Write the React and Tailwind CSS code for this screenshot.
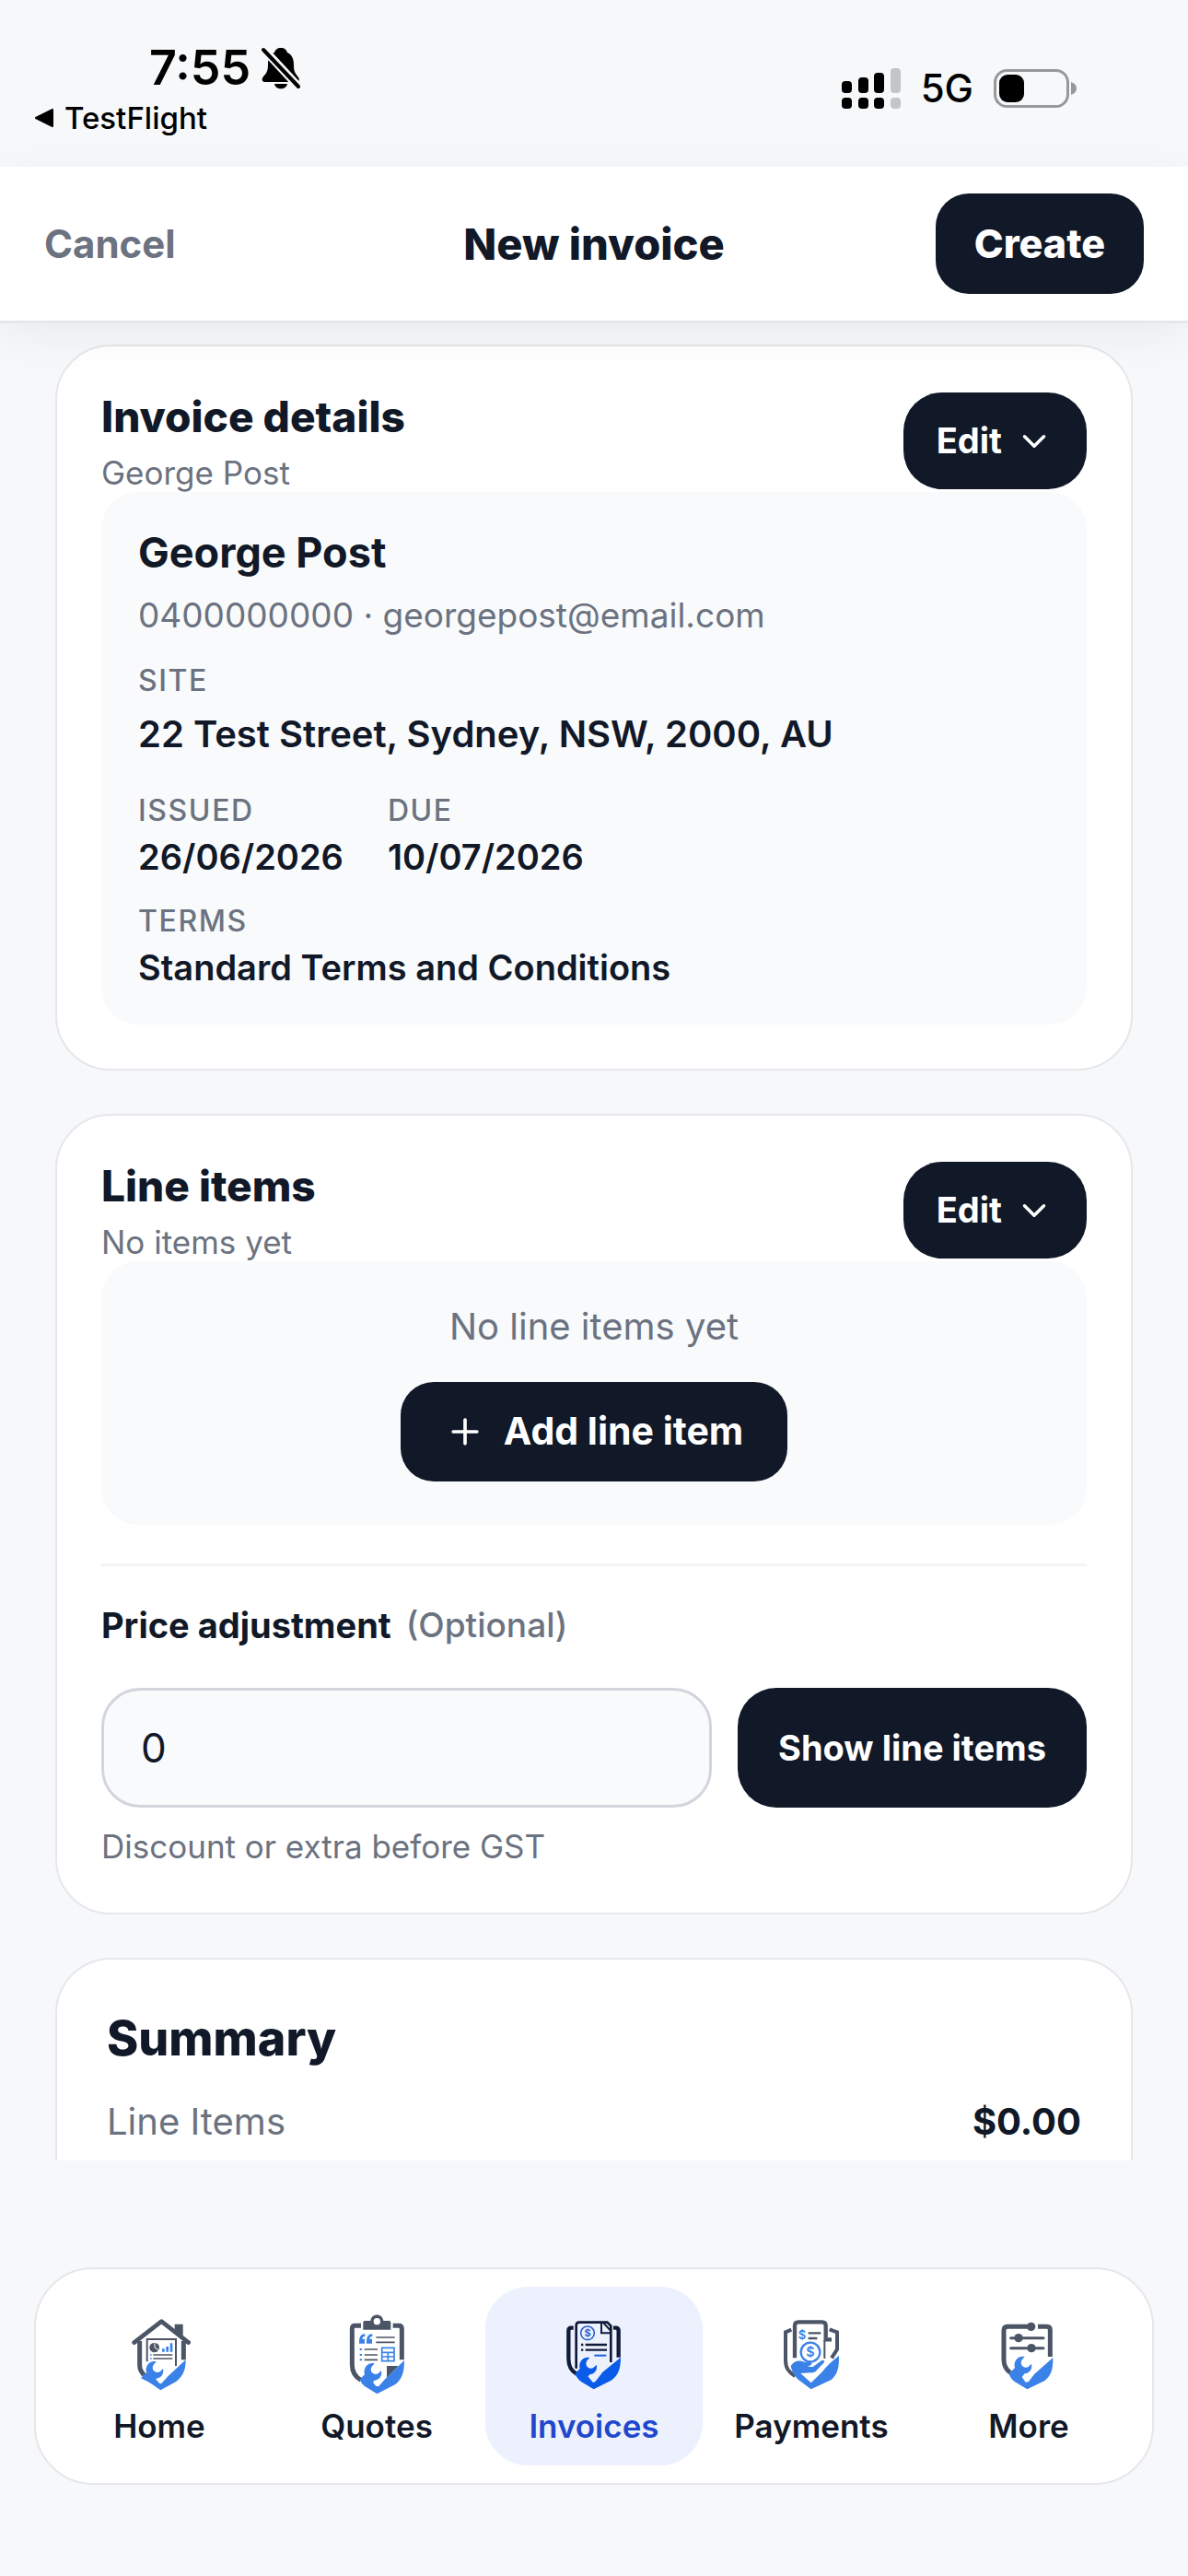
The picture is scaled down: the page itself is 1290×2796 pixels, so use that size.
import React, { useState } from 'react';
import { ChevronDown, Plus } from 'lucide-react';

const SLATE = '#4b5565';
const BLUE = '#3b82e8';

// The wrench that sits in the lower left of a shield, drawn from its jaw centre
function Wrench({ x, y, color }) {
  return (
    <g transform={`translate(${x} ${y})`} fill={color}>
      <path d="M4 -28 C-18 -33 -34 -13 -28 8 L-46 26 L-10 44 L4 27 C20 25 30 12 26 -5 L16 5 Q4 10 -4 2 Q-11 -7 -5 -18 Z" />
    </g>
  );
}

function HomeIcon() {
  return (
    <svg viewBox="51 90 216 270" className="h-[90px] w-[72px]" fill="none" aria-hidden="true">
      <path d="M209 128 H236 V172 L209 148 Z" fill={SLATE} />
      <path d="M77 188 L166 119 L254 188" stroke={SLATE} strokeWidth="14" strokeLinecap="round" strokeLinejoin="round" />
      <path d="M95 183 V262 C95 275 100 286 112 296" stroke={SLATE} strokeWidth="15" />
      <path d="M238 183 V244" stroke={SLATE} strokeWidth="15" />
      <path d="M119 250 V177 H213 V264" stroke={SLATE} strokeWidth="6" />
      <circle cx="143" cy="204" r="16" fill={SLATE} />
      <path d="M144 188 V204 L156 212" stroke="white" strokeWidth="3" />
      <path d="M172 218 V208 M185 218 V201 M198 218 V190" stroke={BLUE} strokeWidth="8" />
      <path d="M139 228 H202 M139 240 H202" stroke={SLATE} strokeWidth="4" />
      <path d="M129 228 H134 M129 240 H134" stroke={BLUE} strokeWidth="4" />
      <path d="M245 244 C245 275 238 296 215 314 L163 343 L122 314 C113 308 107 302 103 293 L130 288 L160 321 L166 321 L187 298 Z" fill={BLUE} />
      <Wrench x={145} y={278} color={BLUE} />
    </svg>
  );
}

function QuotesIcon() {
  return (
    <svg viewBox="759 90 216 270" className="h-[90px] w-[72px]" fill="none" aria-hidden="true">
      <path d="M816 133 H797 Q787 133 787 143 V260 C787 282 797 299 816 310" stroke={SLATE} strokeWidth="15" />
      <path d="M920 133 H939 Q949 133 949 143 V244" stroke={SLATE} strokeWidth="15" />
      <path
        d="M823 122 Q823 117 828 117 H847 C850 91 886 91 889 117 H908 Q913 117 913 122 V146 H823 Z M868 108 A11 11 0 1 0 868 130 A11 11 0 1 0 868 108 Z"
        fill={SLATE}
        fillRule="evenodd"
      />
      <path d="M829 160 C812 162 810 172 810 191 H828 V176 H820 C820 170 823 168 829 168 Z M853 160 C836 162 834 172 834 191 H852 V176 H844 C844 170 847 168 853 168 Z" fill={BLUE} />
      <path d="M865 171 H926 M865 187 H926 M827 210 H870 M827 228 H870 M827 244 H870" stroke={SLATE} strokeWidth="5" />
      <path d="M812 210 H819 M812 228 H819 M812 244 H819" stroke={BLUE} strokeWidth="6" />
      <path d="M884 205 H924 V248 H884 Z M884 220 H924 M884 234 H924 M904 220 V248" stroke={BLUE} strokeWidth="5" />
      <path d="M900 264 H938 L900 302 Z" fill={SLATE} />
      <path d="M957 246 C957 284 950 306 928 324 L868 355 L828 330 C821 325 816 318 813 309 L838 296 L865 330 L874 330 L893 308 Z" fill={BLUE} />
      <Wrench x={856} y={284} color={BLUE} />
    </svg>
  );
}

function InvoicesIcon() {
  return (
    <svg viewBox="327 150 216 270" className="h-[90px] w-[72px]" fill="none" aria-hidden="true">
      <path d="M368 200 H361 Q352 200 352 210 V300 C352 325 359 339 378 350" stroke="#101b3b" strokeWidth="13" />
      <path d="M498 200 H506 Q515 200 515 210 V296" stroke="#101b3b" strokeWidth="13" />
      <path d="M377 332 V192 Q377 182 387 182 H478 L490 194 V312" stroke="#101b3b" strokeWidth="8" />
      <path d="M459 184 V217 H490 M466 184 L490 210" stroke="#101b3b" strokeWidth="6" />
      <circle cx="414" cy="217" r="22" stroke="#2b5fd0" strokeWidth="5" />
      <text x="414" y="229" textAnchor="middle" fontSize="33" fontWeight="700" fill="#2b5fd0">$</text>
      <path d="M407 255 H477 M407 272 H477 M393 255 H400 M393 272 H400" stroke="#101b3b" strokeWidth="7" />
      <path d="M436 290 H475" stroke="#1d5fe0" strokeWidth="6" />
      <path d="M522 296 C522 335 513 356 491 371 L434 400 L394 376 C386 371 380 363 374 352 L402 342 L432 378 L440 374 L463 344 Z" fill="#0a5be8" />
      <Wrench x={417} y={325} color="#0a5be8" />
    </svg>
  );
}

function PaymentsIcon() {
  return (
    <svg viewBox="195 90 216 270" className="h-[90px] w-[72px]" fill="none" aria-hidden="true">
      <path d="M238 146 L219 154 V245 C219 270 228 283 250 297" stroke={SLATE} strokeWidth="12" />
      <path d="M362 145 L387 154 V210 L369 238" stroke={SLATE} strokeWidth="12" />
      <path d="M249 238 V133 Q249 121 261 121 H338 Q350 121 350 133 V178 H369" stroke={SLATE} strokeWidth="13" />
      <path d="M346 180 V240" stroke={SLATE} strokeWidth="6" />
      <path d="M293 157 H334 M293 174 H322" stroke={SLATE} strokeWidth="7" />
      <text x="273" y="178" textAnchor="middle" fontSize="39" fontWeight="600" fill={BLUE}>$</text>
      <circle cx="300" cy="219" r="31" stroke={BLUE} strokeWidth="7" fill="white" />
      <text x="300" y="234" textAnchor="middle" fontSize="43" fontWeight="600" fill={BLUE}>$</text>
      <path d="M236 264 C248 246 262 245 281 251 H300 Q306 253 303 260 L291 266 L308 267 L337 246 Q347 244 345 252 L316 283 Q310 287 300 286 L268 288 L302 319 L336 286 Q360 255 393 231 C394 270 388 292 368 309 L302 340 L261 309 C248 298 240 284 236 264 Z" fill={BLUE} />
    </svg>
  );
}

function MoreIcon() {
  return (
    <svg viewBox="903 90 216 270" className="h-[90px] w-[72px]" fill="none" aria-hidden="true">
      <path d="M1020 136 H942 Q930 136 930 148 V244 C930 264 937 276 951 286" stroke={SLATE} strokeWidth="15" />
      <path d="M1041 136 H1070 Q1081 136 1081 147 V234" stroke={SLATE} strokeWidth="15" />
      <path d="M953 173 H1059 M953 206 H1059" stroke={SLATE} strokeWidth="9" strokeLinecap="round" />
      <circle cx="1019" cy="136" r="14" fill={SLATE} />
      <circle cx="978" cy="173" r="14" fill={SLATE} />
      <circle cx="1020" cy="206" r="14" fill={SLATE} />
      <path d="M1090 237 C1091 278 1083 297 1062 313 L1006 340 L965 315 C956 308 950 300 946 287 L975 280 L1001 317 L1010 316 L1030 290 Z" fill={BLUE} />
      <Wrench x={994} y={262} color={BLUE} />
    </svg>
  );
}

const tabs = [
  { id: 'home', label: 'Home', icon: HomeIcon },
  { id: 'quotes', label: 'Quotes', icon: QuotesIcon },
  { id: 'invoices', label: 'Invoices', icon: InvoicesIcon },
  { id: 'payments', label: 'Payments', icon: PaymentsIcon },
  { id: 'more', label: 'More', icon: MoreIcon },
];

function StatusBar() {
  return (
    <div className="flex justify-between pt-11 pr-[120px] pb-[33px] pl-[38px] text-black">
      <div>
        <div className="flex h-[60px] items-center gap-3 pl-[124px]">
          <span className="text-[52px] font-semibold leading-[60px]">7:55</span>
          <svg viewBox="0 0 42 46" className="h-[46px] w-[42px]" aria-label="Silent mode">
            <path d="M21 1 C25 1 27 3 28 6 C34 9 35 14 35 20 C35 27 37 29 40 33 C42 36 40 38 37 38 H4 C0 38 0 35 2 32 C6 28 7 25 7 19 C7 12 9 8 14 6 C15 3 17 1 21 1 Z M14 40 H28 C27 47 15 47 14 40 Z" />
            <path d="M1 1 L41 44" stroke="#f7f8fa" strokeWidth="9" />
            <path d="M2 3 L40 43" stroke="black" strokeWidth="4" strokeLinecap="round" />
          </svg>
        </div>
        <a href="#testflight" className="mt-1 flex h-10 items-center gap-3 text-[33px] font-medium leading-10">
          <svg viewBox="0 0 20 20" className="h-5 w-5" aria-hidden="true">
            <path d="M1 10 L19 1 V19 Z" stroke="black" strokeWidth="2" strokeLinejoin="round" />
          </svg>
          TestFlight
        </a>
      </div>
      <div className="mt-[22px] flex h-[60px] items-center gap-[22px]">
        <svg viewBox="0 0 64 44" className="h-11 w-16" aria-label="Signal">
          <rect x="0" y="14" width="11" height="13" rx="4" />
          <rect x="18" y="10" width="11" height="17" rx="4" />
          <rect x="35" y="5" width="11" height="22" rx="4" />
          <rect x="53" y="0" width="11" height="27" rx="4" fill="#c4c5c7" />
          <rect x="0" y="32" width="11" height="12" rx="4" />
          <rect x="18" y="32" width="11" height="12" rx="4" />
          <rect x="35" y="32" width="11" height="12" rx="4" />
          <rect x="53" y="32" width="11" height="12" rx="4" fill="#c4c5c7" />
        </svg>
        <span className="text-[42px] font-medium leading-[60px]">5G</span>
        <svg viewBox="0 0 91 42" className="h-[42px] w-[91px]" aria-label="Battery">
          <rect x="1.5" y="1.5" width="79" height="39" rx="13" fill="none" stroke="#97989a" strokeWidth="3" />
          <rect x="6" y="6" width="27" height="30" rx="9" />
          <path d="M84 14 Q90 16 90 21 Q90 26 84 28 Z" fill="#97989a" />
        </svg>
      </div>
    </div>
  );
}

function Card({ title, subtitle, children }) {
  return (
    <section className="rounded-[60px] border-2 border-gray-200 bg-white px-12 pt-[50px] pb-12">
      <div className="flex items-start justify-between">
        <div>
          <h2 className="text-[46px] font-extrabold leading-[52px]">{title}</h2>
          <p className="mt-[14px] text-[35px] leading-[42px] text-[#6b7280]">{subtitle}</p>
        </div>
        <button className="flex h-[105px] items-center gap-[14px] rounded-[42px] bg-[#111827] px-9 text-[38px] font-bold text-white">
          Edit
          <ChevronDown className="h-[42px] w-[42px]" strokeWidth={2} />
        </button>
      </div>
      {children}
    </section>
  );
}

function Field({ label, children }) {
  return (
    <div>
      <dt className="text-[32px] font-medium leading-10 tracking-wider text-[#6b7280] uppercase">{label}</dt>
      <dd className="mt-[6px] text-[38px] font-semibold leading-[48px]">{children}</dd>
    </div>
  );
}

export default function App() {
  const [activeTab, setActiveTab] = useState('invoices');
  const [adjustment, setAdjustment] = useState('0');

  return (
    <div className="flex h-screen flex-col overflow-hidden bg-[#f6f8fa] font-['Inter',sans-serif] text-[#111827]">
      <StatusBar />

      {/* Header */}
      <header className="relative z-10 grid grid-cols-3 items-center border-b-3 border-gray-200 bg-white px-12 py-[29px] shadow-[0_12px_48px_rgba(15,23,42,0.06)]">
        <button className="justify-self-start text-[42px] font-bold text-[#6b7280]">Cancel</button>
        <h1 className="text-center text-[47px] font-extrabold leading-[56px]">New invoice</h1>
        <button className="h-[109px] justify-self-end rounded-[36px] bg-[#111827] px-[42px] text-[43px] font-extrabold text-white">
          Create
        </button>
      </header>

      {/* Scrolling form */}
      <main className="flex min-h-0 flex-1 flex-col gap-[47px] overflow-hidden px-[60px] pt-[23px]">
        <Card title="Invoice details" subtitle="George Post">
          <div className="rounded-[40px] bg-[#f9fafc] px-10 pt-10 pb-[38px]">
            <h3 className="text-[45px] font-bold leading-[52px]">George Post</h3>
            <p className="mt-[18px] text-[37px] leading-[48px] text-[#6b7280]">0400000000 · georgepost@email.com</p>
            <dl className="mt-[27px]">
              <dt className="text-[32px] font-medium leading-10 tracking-wider text-[#6b7280] uppercase">Site</dt>
              <dd className="mt-[14px] text-[40px] font-semibold leading-[48px]">22 Test Street, Sydney, NSW, 2000, AU</dd>
            </dl>
            <dl className="mt-[39px] flex gap-12">
              <Field label="Issued">26/06/2026</Field>
              <Field label="Due">10/07/2026</Field>
            </dl>
            <dl className="mt-[26px]">
              <Field label="Terms">Standard Terms and Conditions</Field>
            </dl>
          </div>
        </Card>

        <Card title="Line items" subtitle="No items yet">
          <div className="flex flex-col items-center rounded-[40px] bg-[#f9fafc] py-[47px]">
            <p className="text-[40px] leading-[48px] text-[#6b7280]">No line items yet</p>
            <button className="mt-9 flex h-[108px] items-center gap-5 rounded-[36px] bg-[#111827] px-12 text-[41px] font-bold text-white">
              <Plus className="h-11 w-11" strokeWidth={2} />
              Add line item
            </button>
          </div>
          <div className="mt-[42px] border-t-3 border-gray-100 pt-10">
            <label htmlFor="adjustment" className="flex items-center gap-4 text-[38px] font-bold leading-[48px]">
              Price adjustment
              <span className="text-[37px] font-medium text-[#6b7280]">(Optional)</span>
            </label>
            <div className="mt-11 flex gap-7">
              <input
                id="adjustment"
                value={adjustment}
                onChange={(e) => setAdjustment(e.target.value)}
                inputMode="decimal"
                className="h-[130px] min-w-0 flex-1 rounded-[42px] border-3 border-gray-300 bg-[#f9fafc] px-10 text-[44px] outline-none"
              />
              <button className="h-[130px] rounded-[42px] bg-[#111827] px-11 text-[38px] font-bold text-white">
                Show line items
              </button>
            </div>
            <p className="mt-[18px] text-[35px] leading-[48px] text-[#6b7280]">Discount or extra before GST</p>
          </div>
        </Card>

        <section className="flex-1 rounded-t-[60px] border-2 border-b-0 border-gray-200 bg-white px-[54px] pt-14">
          <h2 className="text-[52px] font-extrabold leading-[60px]">Summary</h2>
          <div className="mt-9 flex justify-between text-[40px] leading-[48px]">
            <span className="text-[#6b7280]">Line Items</span>
            <span className="font-bold">$0.00</span>
          </div>
        </section>
      </main>

      {/* Tab bar */}
      <footer className="px-[37px] pt-[116px] pb-[99px]">
        <nav className="grid grid-cols-5 rounded-[64px] border-2 border-gray-200 bg-white px-4 py-[19px]">
          {tabs.map(({ id, label, icon: Icon }) => (
            <button
              key={id}
              onClick={() => setActiveTab(id)}
              className={`flex flex-col items-center rounded-[46px] pt-7 pb-[23px] ${
                activeTab === id ? 'bg-[#edf1fd] text-[#1f48cc]' : 'text-[#111827]'
              }`}
            >
              <Icon />
              <span className="mt-[13px] text-[35px] font-semibold leading-10">{label}</span>
            </button>
          ))}
        </nav>
      </footer>
    </div>
  );
}
